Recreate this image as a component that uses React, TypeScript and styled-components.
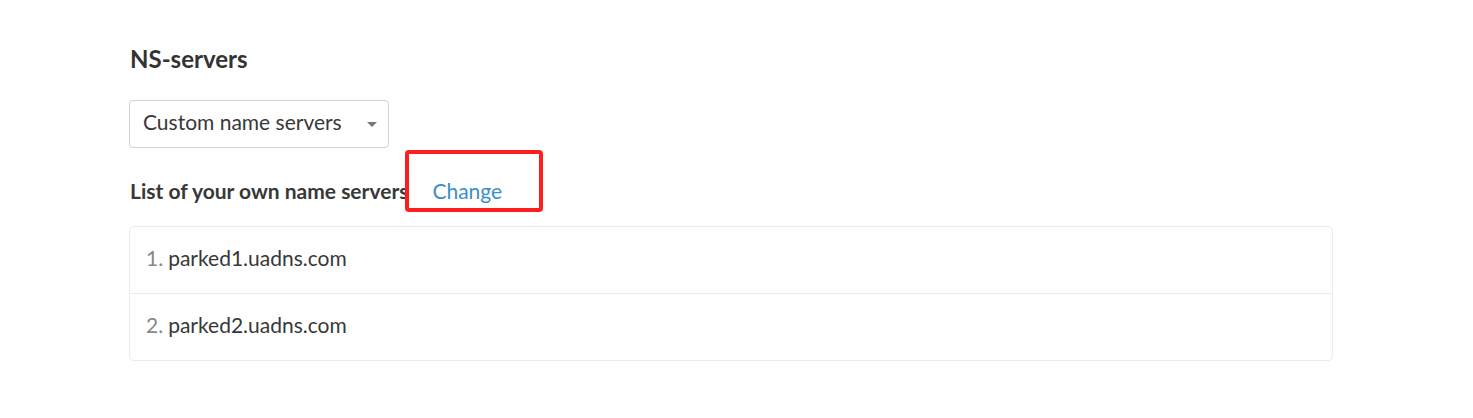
import React from "react";
import styled, { createGlobalStyle } from "styled-components";

const Global = createGlobalStyle`
  html, body { margin: 0; padding: 0; background: #fff; }
  body { font-family: Lato, "Open Sans", sans-serif; color: #333; }
  * { box-sizing: border-box; }
`;

const Page = styled.div`
  width: 1473px;
  height: 418px;
  padding: 44px 140px 0 129px;
`;

const Title = styled.h2`
  margin: 0 0 0 1px;
  font-size: 24px;
  line-height: 30px;
  font-weight: 700;
  color: #333;
`;

const Select = styled.div`
  margin-top: 26px;
  width: 260px;
  height: 48px;
  border: 1px solid #d4d4d4;
  border-radius: 4px;
  display: flex;
  align-items: center;
  justify-content: space-between;
  padding: 0 11px 5px 13px;
  font-size: 21px;
  color: #383838;
`;

const Caret = styled.span`
  width: 0;
  height: 0;
  margin-top: 5px;
  border-left: 5px solid transparent;
  border-right: 5px solid transparent;
  border-top: 5px solid #777;
`;

const LabelRow = styled.div`
  position: relative;
  margin-top: 30px;
  display: flex;
  align-items: baseline;
  gap: 24px;
  padding-left: 1px;
  height: 26px;
`;

const Label = styled.span`
  font-size: 21px;
  font-weight: 700;
  color: #383838;
`;

const Link = styled.a`
  font-size: 21px;
  color: #3b8ec8;
  text-decoration: none;
  cursor: pointer;
`;

const Highlight = styled.div`
  position: absolute;
  left: 276px;
  top: -28px;
  width: 138px;
  height: 62px;
  border: 4px solid #fd1f1f;
  border-radius: 4px;
  pointer-events: none;
`;

const List = styled.ol`
  list-style: none;
  margin: 22px 0 0;
  padding: 0;
  border: 1px solid #ebebeb;
  border-radius: 5px;
`;

const Item = styled.li`
  box-sizing: content-box;
  height: 61px;
  display: flex;
  align-items: center;
  padding: 0 0 5px 16px;
  font-size: 21px;
  color: #383838;
  & + & { border-top: 1px solid #ebebeb; }
`;

const Num = styled.span`
  color: #888;
  margin-right: 5px;
`;

const servers = ["parked1.uadns.com", "parked2.uadns.com"];

export default function App() {
  return (
    <>
      <Global />
      <Page>
        <Title>NS-servers</Title>
        <Select>
          <span>Custom name servers</span>
          <Caret />
        </Select>
        <LabelRow>
          <Label>List of your own name servers</Label>
          <Link>Change</Link>
          <Highlight />
        </LabelRow>
        <List>
          {servers.map((s, i) => (
            <Item key={s}>
              <Num>{i + 1}.</Num>
              {s}
            </Item>
          ))}
        </List>
      </Page>
    </>
  );
}
